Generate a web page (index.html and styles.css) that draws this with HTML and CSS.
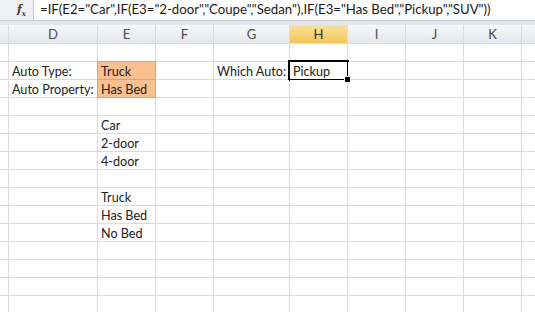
FILE: index.html
```html
<!DOCTYPE html>
<html>

<head>
    <title>Which Auto</title>
    <link rel="stylesheet" href="styles.css">
</head>

<body>
    <div class="formula-bar">
        <div class="fx"><i>f</i><sub>x</sub></div>
        <div class="formula">=IF(E2="Car",IF(E3="2-door","Coupe","Sedan"),IF(E3="Has Bed","Pickup","SUV"))</div>
    </div>
    <div class="strip"></div>

    <div class="sheet">
        <!-- column headers -->
        <div class="hd"></div><div class="hd">D</div><div class="hd">E</div><div class="hd">F</div><div class="hd">G</div><div class="hd hd-active">H</div><div class="hd">I</div><div class="hd">J</div><div class="hd">K</div><div class="hd"></div>

        <!-- row 1 -->
        <div class="c"></div><div class="c"></div><div class="c"></div><div class="c"></div><div class="c"></div><div class="c"></div><div class="c"></div><div class="c"></div><div class="c"></div><div class="c"></div>
        <!-- row 2 -->
        <div class="c"></div><div class="c">Auto Type:</div><div class="c input">Truck</div><div class="c"></div><div class="c">Which Auto:</div><div class="c selected">Pickup</div><div class="c"></div><div class="c"></div><div class="c"></div><div class="c"></div>
        <!-- row 3 -->
        <div class="c"></div><div class="c">Auto Property:</div><div class="c input">Has Bed</div><div class="c"></div><div class="c"></div><div class="c"></div><div class="c"></div><div class="c"></div><div class="c"></div><div class="c"></div>
        <!-- row 4 -->
        <div class="c"></div><div class="c"></div><div class="c"></div><div class="c"></div><div class="c"></div><div class="c"></div><div class="c"></div><div class="c"></div><div class="c"></div><div class="c"></div>
        <!-- row 5 -->
        <div class="c"></div><div class="c"></div><div class="c">Car</div><div class="c"></div><div class="c"></div><div class="c"></div><div class="c"></div><div class="c"></div><div class="c"></div><div class="c"></div>
        <!-- row 6 -->
        <div class="c"></div><div class="c"></div><div class="c">2-door</div><div class="c"></div><div class="c"></div><div class="c"></div><div class="c"></div><div class="c"></div><div class="c"></div><div class="c"></div>
        <!-- row 7 -->
        <div class="c"></div><div class="c"></div><div class="c">4-door</div><div class="c"></div><div class="c"></div><div class="c"></div><div class="c"></div><div class="c"></div><div class="c"></div><div class="c"></div>
        <!-- row 8 -->
        <div class="c"></div><div class="c"></div><div class="c"></div><div class="c"></div><div class="c"></div><div class="c"></div><div class="c"></div><div class="c"></div><div class="c"></div><div class="c"></div>
        <!-- row 9 -->
        <div class="c"></div><div class="c"></div><div class="c">Truck</div><div class="c"></div><div class="c"></div><div class="c"></div><div class="c"></div><div class="c"></div><div class="c"></div><div class="c"></div>
        <!-- row 10 -->
        <div class="c"></div><div class="c"></div><div class="c">Has Bed</div><div class="c"></div><div class="c"></div><div class="c"></div><div class="c"></div><div class="c"></div><div class="c"></div><div class="c"></div>
        <!-- row 11 -->
        <div class="c"></div><div class="c"></div><div class="c">No Bed</div><div class="c"></div><div class="c"></div><div class="c"></div><div class="c"></div><div class="c"></div><div class="c"></div><div class="c"></div>
        <!-- rows 12 - 15 -->
        <div class="c"></div><div class="c"></div><div class="c"></div><div class="c"></div><div class="c"></div><div class="c"></div><div class="c"></div><div class="c"></div><div class="c"></div><div class="c"></div>
        <div class="c"></div><div class="c"></div><div class="c"></div><div class="c"></div><div class="c"></div><div class="c"></div><div class="c"></div><div class="c"></div><div class="c"></div><div class="c"></div>
        <div class="c"></div><div class="c"></div><div class="c"></div><div class="c"></div><div class="c"></div><div class="c"></div><div class="c"></div><div class="c"></div><div class="c"></div><div class="c"></div>
        <div class="c"></div><div class="c"></div><div class="c"></div><div class="c"></div><div class="c"></div><div class="c"></div><div class="c"></div><div class="c"></div><div class="c"></div><div class="c"></div>
    </div>
</body>

</html>
```

FILE: styles.css
```css
body {
    margin: 0;
    padding: 0;
    width: 535px;
    height: 312px;
    overflow: hidden;
    background-color: #ffffff;
    font-family: Lato, "Open Sans", sans-serif;
    font-size: 13.2px;
    color: #222222;
}

.formula-bar {
    display: flex;
    height: 20px;
    background-color: #eef0f3;
    border-bottom: 1px solid #c9cdd2;
}

.fx {
    width: 33px;
    box-sizing: border-box;
    padding: 3px 0 0 17px;
    font-family: "DejaVu Serif", serif;
    font-size: 11px;
    font-weight: bold;
    color: #3a3a3a;
}

.fx sub {
    font-size: 7px;
    font-style: italic;
}

.formula {
    flex: 1;
    background-color: #ffffff;
    border-left: 1px solid #c9cdd2;
    padding: 1px 0 0 6px;
    white-space: nowrap;
    color: #1a1a1a;
}

.strip {
    height: 4px;
    background-color: #e4e7eb;
}

.sheet {
    display: grid;
    grid-template-columns: 8px 88px 57px 57px 75px 57px 57px 57px 57px 1fr;
    grid-template-rows: 18px;
    grid-auto-rows: 17px;
    gap: 1px;
    background-color: #d9dbde;
}

.hd {
    background: linear-gradient(#f7f8f9, #e3e6ea);
    color: #4a4a4a;
    text-align: center;
    line-height: 18px;
    font-size: 13px;
}

.hd-active {
    background: linear-gradient(#fae19b, #f3c55b);
    color: #333333;
}

.c {
    background-color: #ffffff;
    padding-left: 3px;
    font-size: 12.6px;
    line-height: 19px;
    white-space: nowrap;
    position: relative;
}

.input {
    background-color: #fac090;
    box-shadow: 0 0 0 1px #dda276;
    z-index: 1;
}

.selected::after {
    content: "";
    position: absolute;
    top: -2px;
    left: -2px;
    right: -2px;
    bottom: -2px;
    border: 2px solid #000000;
}

.selected::before {
    content: "";
    position: absolute;
    right: -4px;
    bottom: -4px;
    width: 5px;
    height: 5px;
    background-color: #000000;
    border: 1px solid #ffffff;
    z-index: 2;
}
```
